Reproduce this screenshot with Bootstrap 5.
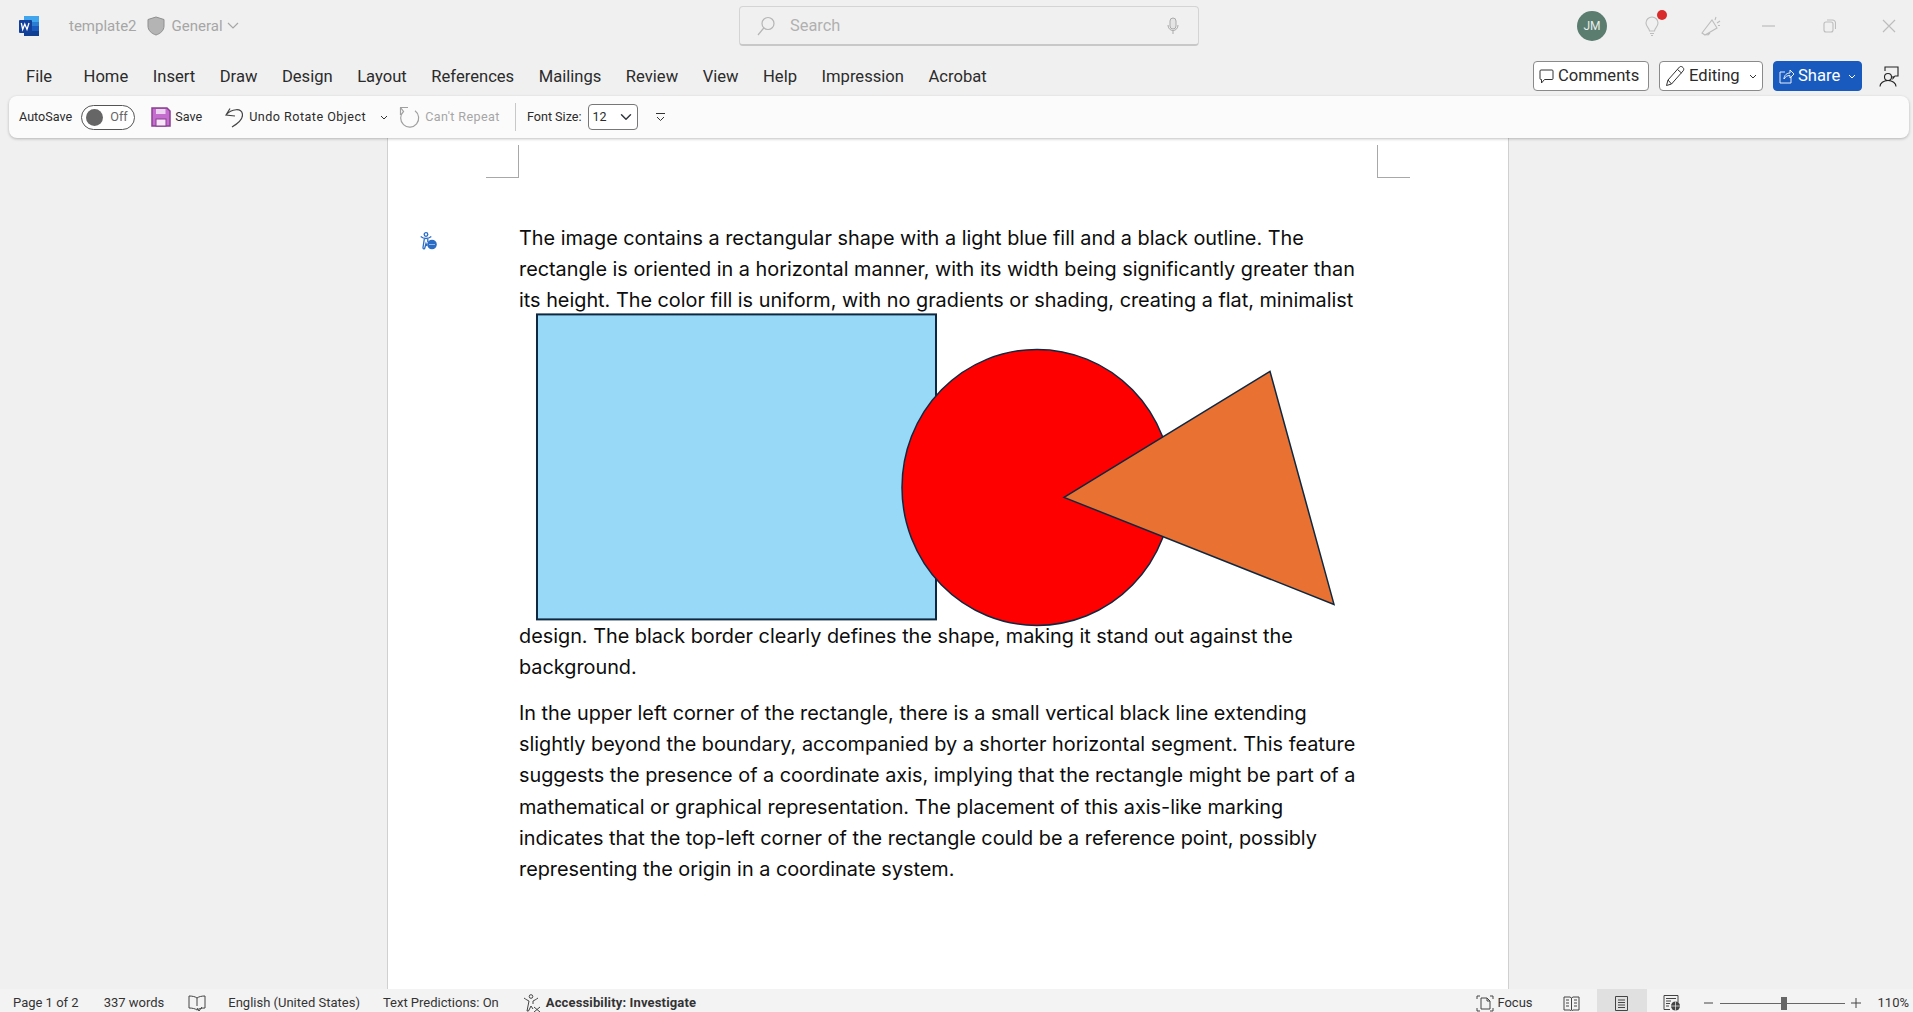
<!DOCTYPE html>
<html lang="en">
<head>
<meta charset="UTF-8">
<title>template2 - Word</title>
<link href="https://cdn.jsdelivr.net/npm/bootstrap@5.3.0/dist/css/bootstrap.min.css" rel="stylesheet">
<style>
    html, body { height: 100%; }
    body { background: #f0f0f0; font-family: Roboto, "Liberation Sans", sans-serif; overflow: hidden; }
    svg { display: block; flex: none; }

    .title-row { height: 52px; position: relative; }
    .word-logo { margin-left: 19px; }
    .doc-name { margin-left: 30px; color: #a6a6a6; font-size: 15px; }
    .shield { margin-left: 10px; }
    .label-name { margin-left: 7px; color: #a6a6a6; font-size: 15px; }
    .search-box { position: absolute; left: 739px; top: 6px; width: 460px; height: 40px; background: #f0f0f0;
        border: 1px solid #d4d4d4; border-bottom: 2px solid #c8c8c8; border-radius: 4px; padding: 0 19px 0 17px; color: #b0b0b0; font-size: 16.4px; }
    .search-box span { margin-left: 15px; padding-top: 1px; }
    .win-zone { position: absolute; left: 1577px; top: 0; height: 52px; }
    .avatar { width: 30px; height: 30px; background: #5a7d70; color: #e8eeeb; font-size: 12px; }
    .bulb-wrap { margin-left: 38px; position: relative; }
    .red-dot { position: absolute; right: -8px; top: -6px; width: 10px; height: 10px; background: #d92b2b; border-radius: 50%; }
    .cheer { margin-left: 42px; }
    .win-min { margin-left: 41px; }
    .win-max { margin-left: 48px; }
    .win-close { margin-left: 46px; }

    .tab-row { height: 44px; padding: 4px 14px 0 26px; color: #2b2b2b; font-size: 16.6px; }
    .tab-list { gap: 24.5px; margin-top: 3px; }
    .tab-list span:first-child { margin-right: 7px; }
    .ribbon-btn { height: 30px; font-size: 16.6px; padding: 0 5px; border: 1px solid #8a8a8a; border-radius: 4px; background: #fff; color: #2b2b2b; gap: 4px; line-height: 1; }
    .btn-comments { width: 116px; margin-right: 10px; }
    .btn-editing { width: 104px; margin-right: 10px; }
    .btn-share { width: 89px; background: #185abd; border-color: #185abd; color: #fff; margin-right: 17px; }
    .btn-share:hover { background: #185abd; color: #fff; }

    .quick-bar { position: relative; z-index: 2; height: 42px; margin: 0 4px 0 9px; padding-left: 10px; background: #fbfbfb; border-radius: 8px;
        box-shadow: 0 1px 3px rgba(0,0,0,.25); font-size: 12.6px; color: #2b2b2b; }
    .auto-toggle { margin-left: 9px; width: 54px; height: 25px; border: 1px solid #555; border-radius: 13px; padding-left: 4px; background: #fff; color: #666; }
    .auto-knob { width: 17px; height: 17px; background: #666; border-radius: 50%; margin-right: 7px; }
    .qb-save { margin-left: 16px; }
    .qb-gap4 { margin-left: 4px; }
    .qb-undo { margin-left: 22px; }
    .qb-undo-txt { margin-left: 6px; letter-spacing: .47px; }
    .qb-caret { margin-left: 14px; }
    .qb-redo { margin-left: 11px; }
    .muted-txt { color: #a6a6a6; margin-left: 5px; letter-spacing: .4px; }
    .qb-sep { width: 1px; height: 28px; background: #c8c8c8; margin: 0 11px 0 15px; }
    .size-pick { width: 50px; height: 26px; margin-left: 6px; padding: 0 0 0 4px; font-size: 12.5px; border-color: #777; border-radius: 4px; background-position: right 3px center; color: #2b2b2b; }
    .qb-more { margin-left: 18px; }

    .doc-area { flex: 1 1 0; min-height: 0; }
    .doc-page { position: relative; width: 1122px; height: 100%; margin-left: 387px; background: #fff; border-left: 1px solid #d0d0d0; border-right: 1px solid #d0d0d0; padding-top: 7px;
        font-family: Inter, "Liberation Sans", sans-serif; font-size: 19.83px; line-height: 31.2px; color: #0d0d0d; }
    .crop-row { margin: 0 98px 0 98px; }
    .crop-l { width: 33px; height: 33px; border-right: 1px solid #a8a8a8; border-bottom: 1px solid #a8a8a8; }
    .crop-r { width: 33px; height: 33px; border-left: 1px solid #a8a8a8; border-bottom: 1px solid #a8a8a8; }
    .a11y-flag { position: absolute; left: 32px; top: 94px; }
    .doc-body { margin: 45px 0 0 131px; white-space: nowrap; }
    .doc-body p { margin: 0 0 15px; }
    .doc-art { overflow: visible; }

    .status-row { height: 23px; padding-top: 5px; background: #f3f3f3; font-size: 13px; color: #333; position: relative; z-index: 2; }
    .st-pages { margin-left: 13px; }
    .st-words { margin-left: 25px; }
    .st-book { margin-left: 24px; }
    .st-lang { margin-left: 22px; }
    .st-pred { margin-left: 23px; }
    .st-a11y { margin-left: 24px; }
    .st-a11y-txt { margin-left: 4px; font-weight: 700; letter-spacing: .15px; }
    .st-focus { margin-left: auto; }
    .st-focus-txt { margin-left: 3px; }
    .st-read { margin-left: 30px; }
    .st-print { margin: -5px 0 0 17px; width: 50px; height: 23px; padding-top: 5px; background: #e0e0e0; }
    .st-web { margin-left: 16px; }
    .st-minus { margin-left: 23px; }
    .zoom-track { position: relative; width: 125px; height: 1px; background: #666; margin: 0 6px 0 7px; }
    .zoom-thumb { position: absolute; left: 61px; top: -6px; width: 6px; height: 13px; background: #666; }
    .st-pct { margin: 0 4px 0 17px; }
</style>
</head>
<body class="d-flex flex-column">

<!-- title bar -->
<div class="title-row d-flex align-items-center">
    <svg class="word-logo" width="20" height="20" viewBox="0 0 20 20">
        <rect x="5" y="0" width="15" height="20" rx="1" fill="#2b7cd3"/>
        <rect x="5" y="0" width="15" height="6" fill="#41a5ee"/>
        <rect x="5" y="10" width="15" height="5" fill="#185abd"/>
        <rect x="5" y="15" width="15" height="5" fill="#103f91"/>
        <rect x="0" y="4" width="13" height="13" rx="1" fill="#12409a"/>
        <path d="M2.3 7l1.4 6.4L5.8 8l2.2 5.4L10 7" fill="none" stroke="#fff" stroke-width="1.3"/>
    </svg>
    <span class="doc-name">template2</span>
    <svg class="shield" width="18" height="20" viewBox="0 0 18 20"><path d="M9 1l8 2.5V10c0 4.5-3.5 7.5-8 9-4.5-1.5-8-4.5-8-9V3.5z" fill="#b4b4b4" stroke="#8e8e8e"/></svg>
    <span class="label-name">General</span>
    <svg class="qb-gap4" width="12" height="8" viewBox="0 0 12 8"><path d="M1 1l5 5 5-5" fill="none" stroke="#a6a6a6" stroke-width="1.2"/></svg>

    <div class="search-box d-flex align-items-center">
        <svg width="18" height="20" viewBox="0 0 18 20"><circle cx="11" cy="7.5" r="6" fill="none" stroke="#b5b5b5" stroke-width="1.2"/><path d="M6.8 12L1 19" stroke="#b5b5b5" stroke-width="1.2"/></svg>
        <span>Search</span>
        <svg class="ms-auto" width="12" height="18" viewBox="0 0 12 18"><rect x="3" y="1" width="6" height="11" rx="3" fill="#e4e4e4" stroke="#aaa"/><path d="M1 8c0 3 2 5.5 5 5.5s5-2.5 5-5.5M6 13.5V17" fill="none" stroke="#aaa"/></svg>
    </div>

    <div class="win-zone d-flex align-items-center">
        <div class="avatar rounded-circle d-flex align-items-center justify-content-center">JM</div>
        <div class="bulb-wrap">
            <svg width="14" height="20" viewBox="0 0 14 20"><path d="M4.5 15c0-3-3.500-4-3.500-8a6 6 0 0 1 12 0c0 4-3.500 5-3.500 8zM5 17.500h4M6 19.500h2" fill="none" stroke="#bdbdbd" stroke-width="1.1"/></svg>
            <span class="red-dot"></span>
        </div>
        <svg class="cheer" width="20" height="20" viewBox="0 0 20 20"><path d="M1 17L11 4l5 8-12 7zM5 18.5l2 .5 2-2M14 4l1-3M16 7l3-2M17 9.5h2" fill="none" stroke="#bdbdbd" stroke-width="1.1"/></svg>
        <svg class="win-min" width="13" height="2" viewBox="0 0 13 2"><path d="M0 1h13" stroke="#bdbdbd" stroke-width="1.2"/></svg>
        <svg class="win-max" width="13" height="14" viewBox="0 0 13 14"><rect x="1" y="3" width="9" height="10" rx="2" fill="none" stroke="#bdbdbd" stroke-width="1.1"/><path d="M4 1h5.5a3 3 0 0 1 3 3v6" fill="none" stroke="#bdbdbd" stroke-width="1.1"/></svg>
        <svg class="win-close" width="14" height="14" viewBox="0 0 14 14"><path d="M1 1l12 12M13 1L1 13" stroke="#bdbdbd" stroke-width="1.2"/></svg>
    </div>
</div>

<!-- ribbon tabs -->
<div class="tab-row d-flex align-items-center justify-content-between">
    <div class="tab-list d-flex">
        <span>File</span><span>Home</span><span>Insert</span><span>Draw</span><span>Design</span><span>Layout</span><span>References</span><span>Mailings</span><span>Review</span><span>View</span><span>Help</span><span>Impression</span><span>Acrobat</span>
    </div>
    <div class="d-flex align-items-center">
        <button class="btn ribbon-btn btn-comments d-flex align-items-center">
            <svg width="15" height="15" viewBox="0 0 15 15"><path d="M2 1h11a1 1 0 0 1 1 1v7.500a1 1 0 0 1-1 1H5.500L2.500 14v-3.500H2a1 1 0 0 1-1-1V2a1 1 0 0 1 1-1z" fill="none" stroke="#333"/></svg>Comments
        </button>
        <button class="btn ribbon-btn btn-editing d-flex align-items-center">
            <svg width="20" height="22" viewBox="0 0 20 22"><path d="M1.5 20.500l1.500-5.500L14.500 2c1-1 2.500-.5 3.500.5s1 2.500 0 3.500L6.500 19zM3 15l3.500 4M12.500 4.500l4 3.500" fill="none" stroke="#333"/></svg>Editing
            <svg class="ms-auto" width="8" height="5" viewBox="0 0 8 5"><path d="M1 1l3 3 3-3" fill="none" stroke="#333"/></svg>
        </button>
        <button class="btn ribbon-btn btn-share d-flex align-items-center">
            <svg width="15" height="16" viewBox="0 0 15 16"><path d="M6 4H1v11h11V9M5 11c0-4 3-6 6-6V2l4 4-4 4V7.500c-3 0-4.500 1-6 3.500z" fill="none" stroke="#fff" stroke-width=".9"/></svg>Share
            <svg class="ms-auto" width="8" height="5" viewBox="0 0 8 5"><path d="M1 1l3 3 3-3" fill="none" stroke="#fff"/></svg>
        </button>
        <svg width="20" height="21" viewBox="0 0 20 21"><path d="M6 5V1h13v9h-3l-2 2.500V10M9 7.500c2 0 3.500 1.500 3.500 3.500S11 14.500 9 14.500 5.500 13 5.500 11 7 7.500 9 7.500zM1 20.500c0-3.500 3.500-6 8-6s8 2.500 8 6" fill="none" stroke="#222" stroke-width="1.1"/></svg>
    </div>
</div>

<!-- quick access toolbar -->
<div class="quick-bar d-flex align-items-center">
    <span>AutoSave</span>
    <div class="auto-toggle d-flex align-items-center"><span class="auto-knob"></span>Off</div>
    <svg class="qb-save" width="20" height="20" viewBox="0 0 20 20"><path d="M1 1h15l3 3v15H1z" fill="#c56ccf" stroke="#8a3f92" stroke-width="1.500"/><rect x="5" y="2" width="9.500" height="5" fill="#ecd3ef"/><rect x="5" y="12" width="10" height="7" fill="#f6e6f7" stroke="#8a3f92"/></svg>
    <span class="qb-gap4">Save</span>
    <svg class="qb-undo" width="19" height="21" viewBox="0 0 19 21"><path d="M6 1.500L2 8l9 1M2 8c5-6 16.500-8 16.500 0 0 5-5.500 9-10.500 12" fill="none" stroke="#444" stroke-width="1.2"/></svg>
    <span class="qb-undo-txt">Undo Rotate Object</span>
    <svg class="qb-caret" width="8" height="5" viewBox="0 0 8 5"><path d="M1 1l3 3 3-3" fill="none" stroke="#333"/></svg>
    <svg class="qb-redo" width="21" height="22" viewBox="0 0 21 22"><path d="M1 1.500h8M1.500 1.500V9M1.500 1.500L4.500 5.500A9 9 0 1 0 16 4.800" fill="none" stroke="#a0a0a0" stroke-width="1.2"/></svg>
    <span class="muted-txt">Can't Repeat</span>
    <span class="qb-sep"></span>
    <span>Font Size:</span>
    <select class="form-select size-pick" aria-label="Font Size"><option>12</option></select>
    <svg class="qb-more" width="9" height="9" viewBox="0 0 9 9"><path d="M0 .5h9M1 4l3.500 3.500L8 4" fill="none" stroke="#333"/></svg>
</div>

<!-- document -->
<div class="doc-area">
    <div class="doc-page">
        <div class="crop-row d-flex justify-content-between">
            <div class="crop-l"></div>
            <div class="crop-r"></div>
        </div>
        <svg class="a11y-flag" width="17" height="18" viewBox="0 0 17 18"><circle cx="6" cy="2.500" r="1.800" fill="none" stroke="#2b6cc4" stroke-width="1.300"/><path d="M.7 4.500C2.500 6 4 6.500 6 6.500s3.500-.5 5.300-2M4.300 7L3 15.500c-.2 1.500 1.500 1.700 1.800.5L6 11.500l1 2.500M7.800 7v3" fill="none" stroke="#2b6cc4" stroke-width="1.300"/><circle cx="12" cy="12.500" r="4.800" fill="#2b6cc4"/><path d="M9.500 12.500h5" stroke="#fff" stroke-dasharray="1 1"/></svg>
        <div class="doc-body">
            <p>The image contains a rectangular shape with a light blue fill and a black outline. The<br>
            rectangle is oriented in a horizontal manner, with its width being significantly greater than<br>
            its height. The color fill is uniform, with no gradients or shading, creating a flat, minimalist
            <svg class="doc-art" width="821" height="304" viewBox="519 316.6 821 304">
                <rect x="537" y="314" width="399" height="305" fill="#97d9f7" stroke="#0e2841" stroke-width="2"/>
                <ellipse cx="1037" cy="487" rx="135" ry="138" fill="#ff0000" stroke="#0e2841" stroke-width="1.5"/>
                <polygon points="1270,371 1064,497 1334,604" fill="#e97132" stroke="#0e2841" stroke-width="1.5"/>
            </svg>
            design. The black border clearly defines the shape, making it stand out against the<br>
            background.</p>
            <p>In the upper left corner of the rectangle, there is a small vertical black line extending<br>
            slightly beyond the boundary, accompanied by a shorter horizontal segment. This feature<br>
            suggests the presence of a coordinate axis, implying that the rectangle might be part of a<br>
            mathematical or graphical representation. The placement of this axis-like marking<br>
            indicates that the top-left corner of the rectangle could be a reference point, possibly<br>
            representing the origin in a coordinate system.</p>
        </div>
    </div>
</div>

<!-- status bar -->
<div class="status-row d-flex align-items-center">
    <span class="st-pages">Page 1 of 2</span>
    <span class="st-words">337 words</span>
    <svg class="st-book" width="18" height="17" viewBox="0 0 18 17"><path d="M9 3C7 1.500 4 1 1 1v12c3 0 6 .5 8 2 2-1.500 5-2 8-2V1c-3 0-6 .5-8 2zM9 3v8" fill="none" stroke="#444"/><path d="M9 13l2 3 3-4" fill="none" stroke="#444"/></svg>
    <span class="st-lang">English (United States)</span>
    <span class="st-pred">Text Predictions: On</span>
    <svg class="st-a11y" width="19" height="19" viewBox="0 0 19 19"><circle cx="8" cy="2.500" r="1.800" fill="none" stroke="#444"/><path d="M1 4c2 1.500 4 2.500 5 3L4 17h1.500L8 12l2 3M15 4c-2 1.500-4 2.500-5 3v3M11 13l6 5M17 13l-6 5" fill="none" stroke="#444"/></svg>
    <span class="st-a11y-txt">Accessibility: Investigate</span>
    <svg class="st-focus" width="18" height="17" viewBox="0 0 18 17"><path d="M1 4V1h3M14 1h3v3M17 13v3h-3M4 16H1v-3M5 14V3h6l3 3v8zM11 3v3h3" fill="none" stroke="#444"/></svg>
    <span class="st-focus-txt">Focus</span>
    <svg class="st-read" width="17" height="15" viewBox="0 0 17 15"><path d="M1 1h6l1.500 1L10 1h6v13h-6l-1.500 1L7 14H1zM8.500 2v12M3 4h3M3 7h3M3 10h3M11 4h3M11 7h3M11 10h3" fill="none" stroke="#444"/></svg>
    <div class="st-print d-flex align-items-center justify-content-center">
        <svg width="13" height="15" viewBox="0 0 13 15"><path d="M.5.5h12v14H.5zM3 4h7M3 6.500h7M3 9h7M3 11.500h7" fill="none" stroke="#444"/></svg>
    </div>
    <svg class="st-web" width="18" height="16" viewBox="0 0 18 16"><path d="M7 14.500H1V.5h14v7M3 3.500h10M3 6h5M3 8.500h4M3 11h3" fill="none" stroke="#444"/><circle cx="12.500" cy="11" r="4.500" fill="#444"/><path d="M8 11h9M12.500 6.500v9" stroke="#f3f3f3" stroke-width=".7"/></svg>
    <svg class="st-minus" width="9" height="2" viewBox="0 0 9 2"><path d="M0 1h9" stroke="#444"/></svg>
    <div class="zoom-track"><span class="zoom-thumb"></span></div>
    <svg width="10" height="10" viewBox="0 0 10 10"><path d="M0 5h10M5 0v10" stroke="#444"/></svg>
    <span class="st-pct">110%</span>
</div>

<script src="https://cdn.jsdelivr.net/npm/bootstrap@5.3.0/dist/js/bootstrap.bundle.min.js"></script>
</body>
</html>
